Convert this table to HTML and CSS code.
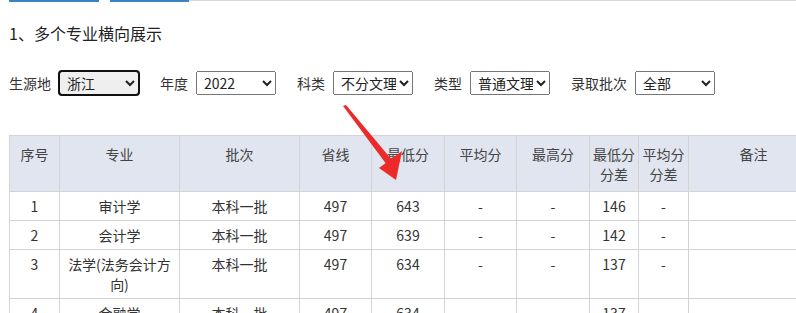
FILE: index.html
```html
<!DOCTYPE html>
<html lang="zh-CN">
<head>
    <meta charset="UTF-8">
    <title>多个专业横向展示</title>
    <link rel="stylesheet" href="styles.css">
</head>
<body>
    <div class="page">
        <!-- 顶部选项卡底边 -->
        <div class="tab-strip">
            <div class="tab-stub"></div>
            <div class="tab-stub short"></div>
            <div class="tab-line"></div>
        </div>

        <h2 class="section-title">1、多个专业横向展示</h2>

        <!-- 筛选条件 -->
        <div class="filters">
            <label class="filter">
                <span class="filter-label">生源地</span>
                <select class="filter-select focused">
                    <option>浙江</option>
                </select>
            </label>
            <label class="filter">
                <span class="filter-label">年度</span>
                <select class="filter-select">
                    <option>2022</option>
                </select>
            </label>
            <label class="filter">
                <span class="filter-label">科类</span>
                <select class="filter-select">
                    <option>不分文理</option>
                </select>
            </label>
            <label class="filter">
                <span class="filter-label">类型</span>
                <select class="filter-select">
                    <option>普通文理</option>
                </select>
            </label>
            <label class="filter">
                <span class="filter-label">录取批次</span>
                <select class="filter-select">
                    <option>全部</option>
                </select>
            </label>
        </div>

        <!-- 分数表 -->
        <table class="score-table">
            <colgroup>
                <col style="width:50px">
                <col style="width:120px">
                <col style="width:120px">
                <col style="width:72px">
                <col style="width:73px">
                <col style="width:72px">
                <col style="width:73px">
                <col style="width:49px">
                <col style="width:50px">
                <col style="width:130px">
            </colgroup>
            <thead>
                <tr>
                    <th>序号</th>
                    <th>专业</th>
                    <th>批次</th>
                    <th>省线</th>
                    <th>最低分</th>
                    <th>平均分</th>
                    <th>最高分</th>
                    <th>最低分分差</th>
                    <th>平均分分差</th>
                    <th>备注</th>
                </tr>
            </thead>
            <tbody>
                <tr>
                    <td>1</td><td>审计学</td><td>本科一批</td><td>497</td><td>643</td>
                    <td>-</td><td>-</td><td>146</td><td>-</td><td></td>
                </tr>
                <tr>
                    <td>2</td><td>会计学</td><td>本科一批</td><td>497</td><td>639</td>
                    <td>-</td><td>-</td><td>142</td><td>-</td><td></td>
                </tr>
                <tr>
                    <td>3</td><td>法学(法务会计方向)</td><td>本科一批</td><td>497</td><td>634</td>
                    <td>-</td><td>-</td><td>137</td><td>-</td><td></td>
                </tr>
                <tr>
                    <td>4</td><td>金融学</td><td>本科一批</td><td>497</td><td>634</td>
                    <td>-</td><td>-</td><td>137</td><td>-</td><td></td>
                </tr>
            </tbody>
        </table>
    </div>

    <!-- 红色标注箭头 -->
    <svg class="mark-arrow" width="796" height="313" viewBox="0 0 796 313">
        <polygon points="343,106 346,105 392,160 387,165" fill="#ec2a2a"/>
        <polygon points="379,168 402,151 396,180" fill="#ec2a2a"/>
    </svg>
</body>
</html>
```

FILE: styles.css
```css
* {
    margin: 0;
    padding: 0;
    box-sizing: border-box;
}

body {
    width: 796px;
    height: 313px;
    overflow: hidden;
    position: relative;
    background: #fff;
    font-family: "Noto Sans CJK SC", "Microsoft YaHei", sans-serif;
    font-size: 14px;
    color: #333;
}

.page {
    padding-left: 9px;
}

/* 顶部选项卡底边 */
.tab-strip {
    display: flex;
    height: 2px;
    margin-left: -9px;
}
.tab-stub {
    width: 90px;
    margin-left: 9px;
    background: #3b84c4;
}
.tab-stub.short {
    width: 79px;
    margin-left: 11px;
}
.tab-line {
    flex: 1;
    height: 1px;
    background: #d6d6d6;
}

.section-title {
    margin-top: 19px;
    font-size: 16px;
    font-weight: normal;
    line-height: 24px;
    color: #222;
}

/* 筛选条件 */
.filters {
    display: flex;
    align-items: center;
    gap: 21px;
    margin-top: 26px;
}
.filter {
    display: flex;
    align-items: center;
    gap: 8px;
}
.filter-label {
    font-size: 14px;
    color: #333;
}
.filter-select {
    width: 80px;
    height: 24px;
    font-family: inherit;
    font-size: 14px;
    color: #222;
    padding-left: 3px;
}
.filter-select.focused {
    outline: 2px solid #101010;
    outline-offset: -1px;
    border-radius: 3px;
}

/* 分数表 */
.score-table {
    margin-top: 40px;
    width: 809px;
    table-layout: fixed;
    border-collapse: collapse;
}
.score-table th,
.score-table td {
    border: 1px solid #d3d3d6;
    text-align: center;
    vertical-align: top;
    line-height: 20px;
}
.score-table th {
    background: #e0e5ef;
    font-weight: normal;
    color: #444;
    padding: 8px 3px 7px;
}
.score-table td {
    padding: 4px 5px 4px;
    color: #333;
}

.mark-arrow {
    position: absolute;
    left: 0;
    top: 0;
    pointer-events: none;
}
```
